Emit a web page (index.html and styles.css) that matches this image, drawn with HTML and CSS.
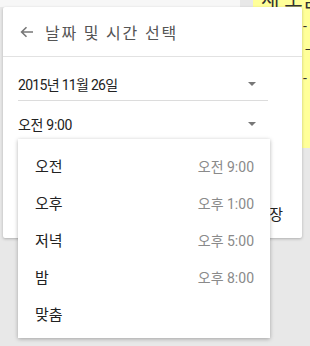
FILE: index.html
```html
<!DOCTYPE html>
<html lang="ko">
<head>
    <meta charset="UTF-8">
    <meta name="viewport" content="width=device-width, initial-scale=1.0">
    <title>날짜 및 시간 선택</title>
    <link rel="stylesheet" href="styles.css">
</head>
<body>
    <div class="desk">
        <!-- Nền phía sau hộp thoại -->
        <div class="backdrop">
            <div class="strip"></div>
            <div class="note">
                <p>새 도움</p>
                <p class="peek">-</p>
                <p class="peek">ㄱ</p>
                <p class="peek">-</p>
            </div>
        </div>

        <!-- Hộp thoại chọn ngày giờ -->
        <div class="dialog">
            <div class="dialog-head">
                <svg class="back" width="14" height="12" viewBox="0 0 14 12">
                    <path d="M13 6H2M6.5 1.2L1.6 6l4.9 4.8" fill="none" stroke="#777" stroke-width="1.6"/>
                </svg>
                <span class="title">날짜 및 시간 선택</span>
            </div>
            <div class="dialog-body">
                <div class="field underline">
                    <span class="date">2015년 11월 26일</span>
                    <span class="caret"></span>
                </div>
                <div class="field">
                    <span>오전 9:00</span>
                    <span class="caret"></span>
                </div>
                <div class="actions">
                    <span class="btn">저장</span>
                </div>
            </div>

            <!-- Menu thả xuống -->
            <ul class="menu">
                <li><span>오전</span><span class="hint">오전 9:00</span></li>
                <li><span>오후</span><span class="hint">오후 1:00</span></li>
                <li><span>저녁</span><span class="hint">오후 5:00</span></li>
                <li><span>밤</span><span class="hint">오후 8:00</span></li>
                <li><span>맞춤</span></li>
            </ul>
        </div>
    </div>
</body>
</html>
```

FILE: styles.css
```css
* {
    margin: 0;
    padding: 0;
    box-sizing: border-box;
}

body {
    background-color: #e8e8e8;
    font-family: Roboto, "Noto Sans CJK KR", sans-serif;
    color: #222;
}

.desk {
    position: relative;
    width: 310px;
    height: 346px;
    overflow: hidden;
}

/* Nền */
.backdrop {
    display: flex;
    align-items: flex-start;
}
.strip {
    width: 240px;
    height: 7px;
    background-color: #f7f7f7;
    margin-right: 13px;
}
.note {
    width: 57px;
    height: 161px;
    background-color: #ffff99;
    padding: 0 0 0 8px;
    font-size: 20px;
    line-height: 26px;
    color: #333;
    white-space: nowrap;
    overflow: hidden;
    margin-top: -13px;
}
.note .peek {
    padding-left: 42px;
    font-size: 14px;
}

/* Hộp thoại */
.dialog {
    position: absolute;
    left: 3px;
    top: 7px;
    width: 299px;
    height: 231px;
    background-color: #fff;
    border-radius: 2px;
    box-shadow: 0 1px 3px rgba(0, 0, 0, 0.25);
}
.dialog-head {
    height: 50px;
    display: flex;
    align-items: center;
    padding: 0 0 0 17px;
    border-bottom: 1px solid #e2e2e2;
}
.back {
    margin-right: 11px;
}
.title {
    font-size: 16px;
    color: #555;
    letter-spacing: 1.8px;
}

.dialog-body {
    padding: 4px 34px 0 15px;
}
.field {
    height: 40px;
    display: flex;
    align-items: center;
    justify-content: space-between;
    font-size: 14px;
    letter-spacing: -0.3px;
    padding-top: 6px;
}
.field .date {
    letter-spacing: -0.7px;
}
.field.underline {
    border-bottom: 1px solid #dcdcdc;
}
.caret {
    width: 0;
    height: 0;
    border-left: 4px solid transparent;
    border-right: 4px solid transparent;
    border-top: 4px solid #777;
    margin-right: 12px;
}

.actions {
    display: flex;
    justify-content: flex-end;
    padding-top: 62px;
    margin-right: -15px;
}
.btn {
    font-size: 15px;
}

/* Menu */
.menu {
    position: absolute;
    left: 15px;
    top: 132px;
    width: 252px;
    list-style: none;
    background-color: #fff;
    padding: 8px 0 6px;
    box-shadow: 0 1px 4px rgba(0, 0, 0, 0.3);
}
.menu li {
    height: 37px;
    display: flex;
    align-items: center;
    justify-content: space-between;
    padding: 0 16px 0 17px;
    font-size: 15px;
}
.menu .hint {
    color: #8a8a8a;
    font-size: 14px;
}
```
